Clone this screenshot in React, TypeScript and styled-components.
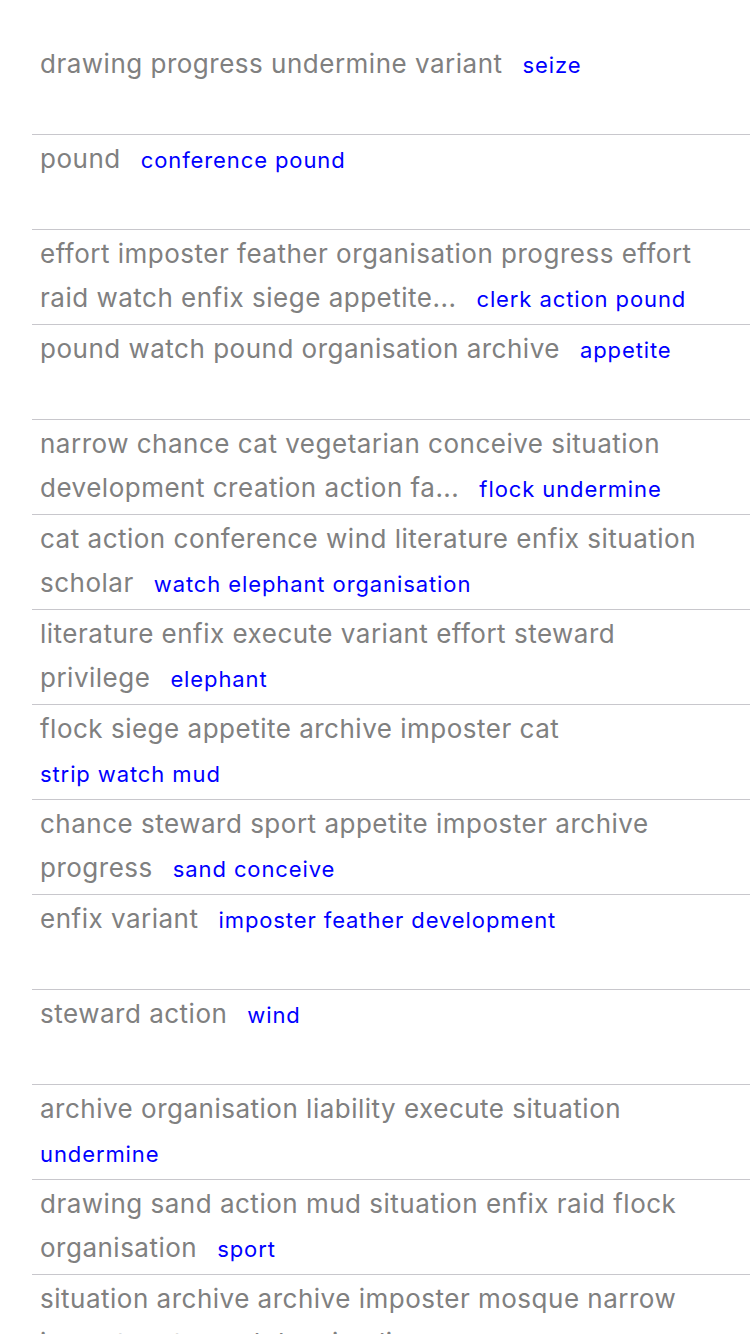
import styled, { createGlobalStyle } from 'styled-components';

interface Entry {
    title: string;
    tag: string;
}

const entries: Entry[] = [
    { title: 'drawing progress undermine variant', tag: 'seize' },
    { title: 'pound', tag: 'conference pound' },
    { title: 'effort imposter feather organisation progress effort raid watch enfix siege appetite...', tag: 'clerk action pound' },
    { title: 'pound watch pound organisation archive', tag: 'appetite' },
    { title: 'narrow chance cat vegetarian conceive situation development creation action fa...', tag: 'flock undermine' },
    { title: 'cat action conference wind literature enfix situation scholar', tag: 'watch elephant organisation' },
    { title: 'literature enfix execute variant effort steward privilege', tag: 'elephant' },
    { title: 'flock siege appetite archive imposter cat', tag: 'strip watch mud' },
    { title: 'chance steward sport appetite imposter archive progress', tag: 'sand conceive' },
    { title: 'enfix variant', tag: 'imposter feather development' },
    { title: 'steward action', tag: 'wind' },
    { title: 'archive organisation liability execute situation', tag: 'undermine' },
    { title: 'drawing sand action mud situation enfix raid flock organisation', tag: 'sport' },
    { title: 'situation archive archive imposter mosque narrow imposter steward drawing li...', tag: 'sit strip' },
];

function App() {
    return (
        <>
            <GlobalStyle />
            <List>
                {entries.map((e, i) => (
                    <Row key={i}>
                        <Text>
                            <Title>{e.title}</Title>
                            <Tag>{e.tag}</Tag>
                        </Text>
                    </Row>
                ))}
            </List>
        </>
    )
}

export default App

const GlobalStyle = createGlobalStyle`
    html, body {
        margin: 0;
        padding: 0;
        background: #fff;
    }
    body {
        font-family: Inter, "Liberation Sans", sans-serif;
        overflow: hidden;
    }
`

const List = styled.main`
    padding-top: 40px;
    padding-left: 32px;
    width: 750px;
    box-sizing: border-box;
`

const Row = styled.div`
    height: 95px;
    box-sizing: border-box;
    border-bottom: 1px solid #c8c7cc;
    padding: 2px 4px 0 8px;
    overflow: hidden;
`

const Text = styled.p`
    margin: 0;
    font-size: 26px;
    line-height: 44px;
`

const Title = styled.span`
    letter-spacing: 0.5px;
    color: #808080;
    padding-right: 20px;
`

const Tag = styled.span`
    display: inline-block;
    font-size: 22px;
    line-height: 26px;
    letter-spacing: 0.9px;
    color: #0000ff;
    white-space: nowrap;
`
